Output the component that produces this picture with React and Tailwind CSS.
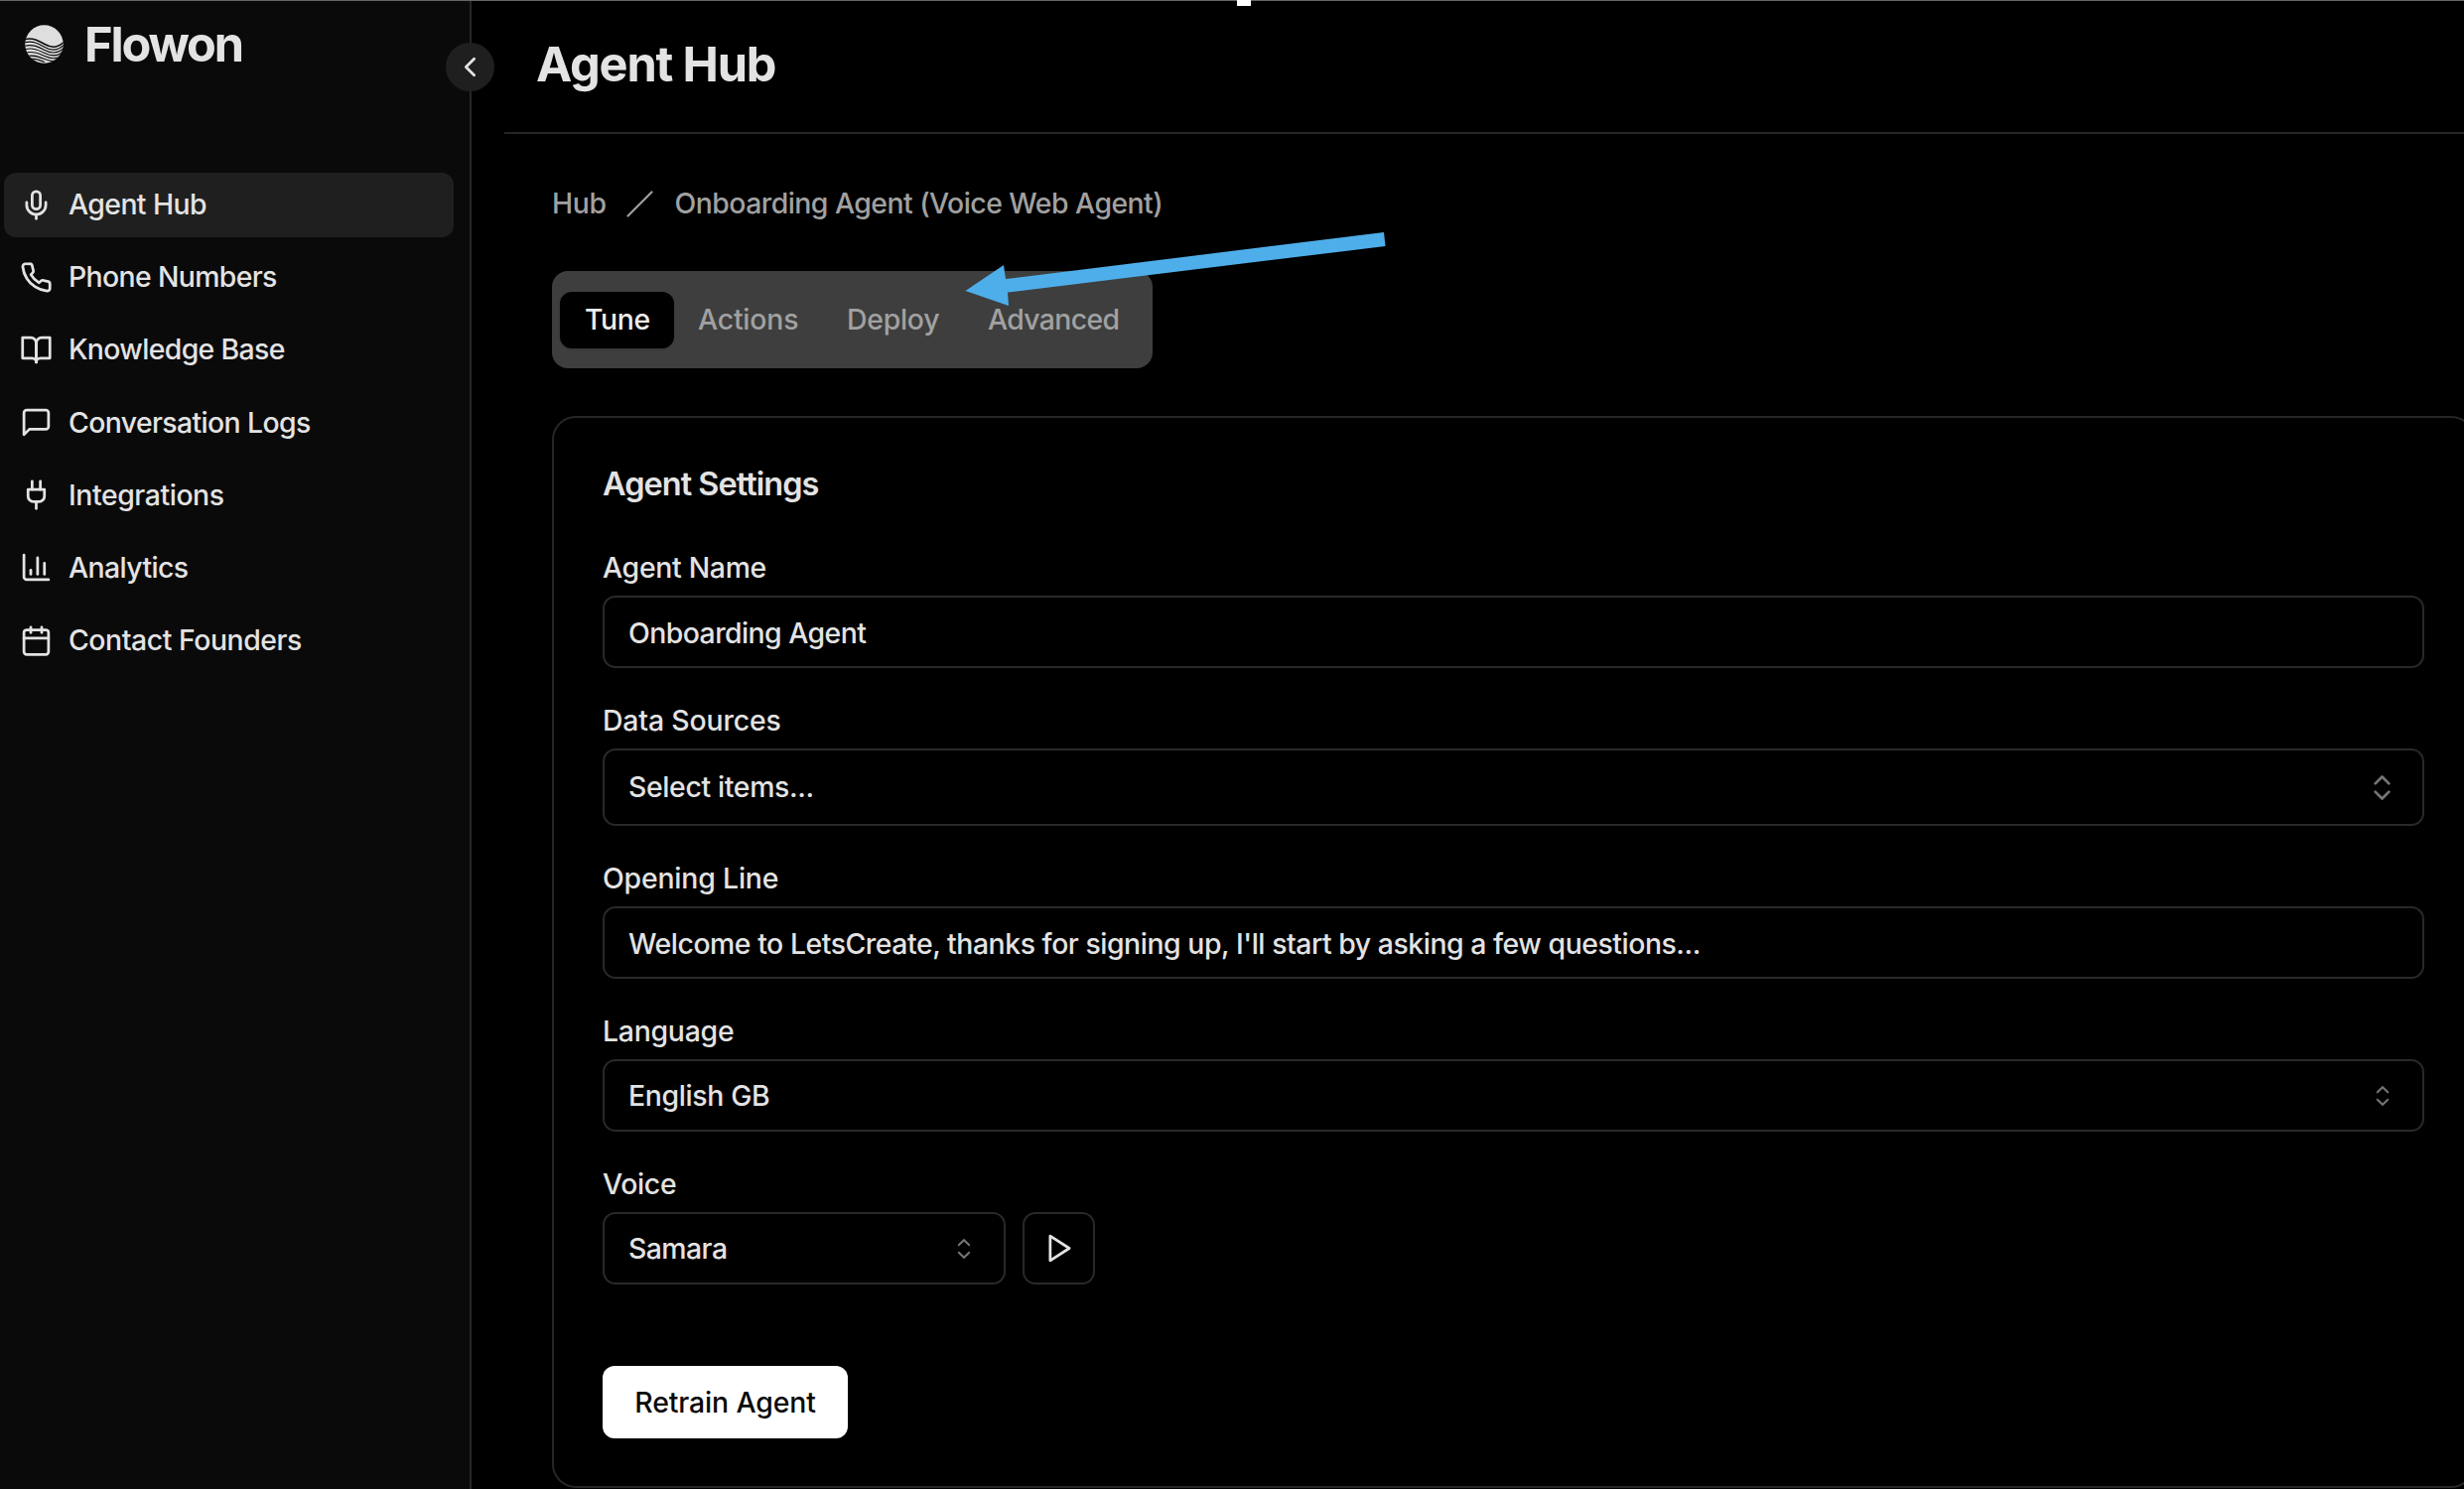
function Icon({ children, className = "size-[33px]", stroke = 2 }) {
  return (
    <svg
      viewBox="0 0 24 24"
      fill="none"
      stroke="currentColor"
      strokeWidth={stroke}
      strokeLinecap="round"
      strokeLinejoin="round"
      className={"block shrink-0 " + className}
    >
      {children}
    </svg>
  );
}

const navItems = [
  {
    label: "Agent Hub",
    active: true,
    tracking: "tracking-[-0.600px]",
    icon: (
      <>
        <path d="M12 2a3 3 0 0 0-3 3v7a3 3 0 0 0 6 0V5a3 3 0 0 0-3-3Z" />
        <path d="M19 10v2a7 7 0 0 1-14 0v-2" />
        <path d="M12 19v3" />
      </>
    ),
  },
  {
    label: "Phone Numbers",
    tracking: "tracking-[-0.640px]",
    icon: (
      <path d="M22 16.92v3a2 2 0 0 1-2.18 2 19.79 19.79 0 0 1-8.63-3.07 19.5 19.5 0 0 1-6-6 19.79 19.79 0 0 1-3.07-8.67A2 2 0 0 1 4.11 2h3a2 2 0 0 1 2 1.72 12.84 12.84 0 0 0 .7 2.81 2 2 0 0 1-.45 2.11L8.09 9.91a16 16 0 0 0 6 6l1.27-1.27a2 2 0 0 1 2.11-.45 12.84 12.84 0 0 0 2.81.7A2 2 0 0 1 22 16.92z" />
    ),
  },
  {
    label: "Knowledge Base",
    tracking: "tracking-[-0.650px]",
    icon: (
      <>
        <path d="M2 3h6a4 4 0 0 1 4 4v14a3 3 0 0 0-3-3H2z" />
        <path d="M22 3h-6a4 4 0 0 0-4 4v14a3 3 0 0 1 3-3h7z" />
      </>
    ),
  },
  {
    label: "Conversation Logs",
    tracking: "tracking-[-0.620px]",
    icon: <path d="M21 15a2 2 0 0 1-2 2H7l-4 4V5a2 2 0 0 1 2-2h14a2 2 0 0 1 2 2z" />,
  },
  {
    label: "Integrations",
    tracking: "tracking-[-0.430px]",
    icon: (
      <>
        <path d="M12 22v-5" />
        <path d="M9 8V2" />
        <path d="M15 8V2" />
        <path d="M18 8v5a4 4 0 0 1-4 4h-4a4 4 0 0 1-4-4V8Z" />
      </>
    ),
  },
  {
    label: "Analytics",
    tracking: "tracking-[-0.600px]",
    icon: (
      <>
        <path d="M3 3v16a2 2 0 0 0 2 2h16" />
        <path d="M18 17V9" />
        <path d="M13 17V5" />
        <path d="M8 17v-3" />
      </>
    ),
  },
  {
    label: "Contact Founders",
    tracking: "tracking-[-0.450px]",
    icon: (
      <>
        <rect width="18" height="18" x="3" y="4" rx="2" />
        <path d="M8 2v4" />
        <path d="M16 2v4" />
        <path d="M3 10h18" />
      </>
    ),
  },
];

function Logo() {
  return (
    <svg viewBox="0 0 39 39" className="block size-[39px] shrink-0">
      <defs>
        <clipPath id="disc">
          <circle cx="19.5" cy="19.5" r="19.2" />
        </clipPath>
      </defs>
      <circle cx="19.5" cy="19.5" r="19.2" fill="#dedede" />
      <g clipPath="url(#disc)" fill="none" stroke="#0a0a0a">
        <path d="M0 14.500C8 12.500 14 16 20 19.500S33 23.500 39 17.500" strokeWidth="1.600" />
        <path d="M0 17.700C8 15.700 14 19 20 22.500S33 26.500 39 20.500" strokeWidth="1.200" />
        <path d="M0 21.200C8 19.200 14 22.300 20 25.500S33 29.500 39 23.500" strokeWidth="1.100" />
        <path d="M0 24.700C8 22.700 14 25.500 20 28.500S33 32.500 39 26.500" strokeWidth="1.100" />
        <path d="M0 28.200C8 26.200 14 28.800 20 31.500S33 35.500 39 29.500" strokeWidth="1.100" />
        <path d="M0 31.700C8 29.700 14 32 20 34.500S33 38.500 39 32.500" strokeWidth="1.100" />
        <path d="M3 34.500C9 33 14 35 20 37.500" strokeWidth="1.100" />
      </g>
    </svg>
  );
}

function Sidebar() {
  return (
    <aside className="relative h-[1500px] w-[475px] shrink-0 border-r-2 border-[#262626] bg-[#0a0a0a]">
      <div className="flex items-center pl-[25px] pt-[15px]">
        <div className="-translate-y-px">
          <Logo />
        </div>
        <span className="ml-[21px] h-[60px] text-[48.700px] font-bold leading-[60px] tracking-[-2.150px] whitespace-nowrap">Flowon</span>
      </div>
      <nav className="mt-[98.500px] flex flex-col gap-[8.200px] pl-[4px] pr-[16px]">
        {navItems.map((item) => (
          <a
            key={item.label}
            className={
              "flex h-[65px] items-center rounded-[12px] pl-[16px] " +
              (item.active ? "bg-[#1f1f1f]" : "")
            }
          >
            <Icon>{item.icon}</Icon>
            <span className={"ml-[16px] text-[28.400px] font-[450] leading-[40px] whitespace-nowrap " + item.tracking}>{item.label}</span>
          </a>
        ))}
      </nav>
      <button className="absolute left-[449px] top-[43px] flex size-[49px] items-center justify-center rounded-full bg-[#1f1f1f]">
        <Icon>
          <path d="m15 18-6-6 6-6" />
        </Icon>
      </button>
    </aside>
  );
}

function SmallSort() {
  return (
    <svg
      viewBox="0 0 15 15"
      fill="none"
      stroke="currentColor"
      strokeWidth="0.950"
      strokeLinecap="round"
      className="block size-[32px] shrink-0 text-[#757575]"
    >
      <path d="M5.050 5.750 7.500 3.400 9.950 5.750M5.050 9.250 7.500 11.600 9.950 9.250" />
    </svg>
  );
}

function Field({ label, labelTracking, children }) {
  return (
    <div className="flex flex-col gap-[12px]">
      <div className={"h-[32px] text-[28.400px] font-medium leading-[32px] whitespace-nowrap " + labelTracking}>{label}</div>
      {children}
    </div>
  );
}

function Box({ className, children }) {
  return (
    <div
      className={
        "flex items-center justify-between rounded-[13px] border-2 border-[#292929] pl-[24px] pr-[24px] text-[28.400px] font-[450] whitespace-nowrap " +
        className
      }
    >
      {children}
    </div>
  );
}

export default function App() {
  return (
    <div className="relative flex h-[1500px] w-[2482px] overflow-hidden bg-black font-['Inter',sans-serif] text-[#e3e3e3]">
      <Sidebar />
      <main className="flex min-w-0 flex-1 flex-col">
        <header className="ml-[33px] h-[135px] border-b-2 border-[#262626] pl-[32px] pt-[35px]">
          <h1 className="text-[48.700px] font-bold leading-[60px] tracking-[-1.200px]">Agent Hub</h1>
        </header>

        <div className="mt-[50px] flex h-[40px] items-center pl-[81px] text-[28.400px] font-[450] leading-[40px] text-[#a1a1a1]">
          <span className="w-[75px] tracking-[-0.300px]">Hub</span>
          <svg viewBox="0 0 27 27" className="block size-[27px]" fill="none" stroke="currentColor" strokeWidth="2.200" strokeLinecap="round">
            <path d="M1.500 25.500 25.500 1.500" />
          </svg>
          <span className="ml-[21.500px] whitespace-nowrap tracking-[-0.540px]">Onboarding Agent (Voice Web Agent)</span>
        </div>

        <div className="ml-[81px] mt-[48px] flex h-[98px] w-[605px] items-center rounded-[16px] bg-[#3e3e3e] pl-[8px] text-[28.400px] font-medium text-[#a1a1a1]">
          <div className="flex h-[57px] w-[115px] items-center rounded-[12px] bg-black pl-[25px] tracking-[-0.350px] text-[#ececec] shadow-sm">Tune</div>
          <div className="w-[149px] pl-[24px] tracking-[-0.200px]">Actions</div>
          <div className="w-[142px] pl-[25px] tracking-[-0.250px]">Deploy</div>
          <div className="pl-[25px] tracking-[-0.650px]">Advanced</div>
        </div>

        <section className="ml-[81px] mt-[48px] flex h-[1080px] w-[1937px] shrink-0 flex-col rounded-[24px] border-2 border-[#262626] pl-[49px] pr-[49px] pt-[47px]">
          <h2 className="h-[40px] text-[32.500px] font-semibold leading-[40px] tracking-[-0.980px]">Agent Settings</h2>
          <div className="mt-[48px] flex flex-col gap-[37px]">
            <Field label="Agent Name" labelTracking="tracking-[-0.300px]">
              <Box className="h-[73px]"><span className="translate-y-[2px] tracking-[-0.560px]">Onboarding Agent</span></Box>
            </Field>
            <Field label="Data Sources" labelTracking="tracking-[-0.150px]">
              <Box className="h-[78px]">
                <span className="tracking-[-0.350px]">Select items...</span>
                <Icon className="size-[33px] text-[#757575]">
                  <path d="m7 15 5 5 5-5" />
                  <path d="m7 9 5-5 5 5" />
                </Icon>
              </Box>
            </Field>
            <Field label="Opening Line" labelTracking="tracking-[-0.180px]">
              <Box className="h-[73px]">
                <span className="translate-y-[2px] tracking-[-0.460px]">Welcome to LetsCreate, thanks for signing up, I'll start by asking a few questions...</span>
              </Box>
            </Field>
            <Field label="Language" labelTracking="tracking-[-0.250px]">
              <Box className="h-[73px]">
                <span className="translate-y-px tracking-[-0.350px]">English GB</span>
                <SmallSort />
              </Box>
            </Field>
            <Field label="Voice" labelTracking="tracking-[-0.350px]">
              <div className="flex gap-[17px]">
                <Box className="h-[73px] w-[406px]">
                  <span className="translate-y-px tracking-[-0.550px]">Samara</span>
                  <SmallSort />
                </Box>
                <button className="flex size-[73px] items-center justify-center rounded-[13px] border-2 border-[#292929] pl-px">
                  <Icon>
                    <path d="m5 3 14 9-14 9z" />
                  </Icon>
                </button>
              </div>
            </Field>
          </div>
          <button className="mt-[82px] flex h-[73px] w-[247px] items-center justify-center rounded-[12px] bg-white text-[28.400px] font-medium text-[#0a0a0a]">
            <span className="translate-y-px whitespace-nowrap tracking-[-0.120px]">Retrain Agent</span>
          </button>
        </section>
      </main>

      <div className="absolute left-0 top-0 h-px w-full bg-[#666666]" />
      <div className="absolute left-[1246px] top-0 h-[6px] w-[14px] bg-white" />
      <svg viewBox="0 0 430 80" className="absolute left-[970px] top-[230px] h-[80px] w-[430px]" fill="#4eaeea">
        <path d="M2.500 63 41 37 43 51 424 4 425.500 18 45 64.500 46 78Z" />
      </svg>
    </div>
  );
}
